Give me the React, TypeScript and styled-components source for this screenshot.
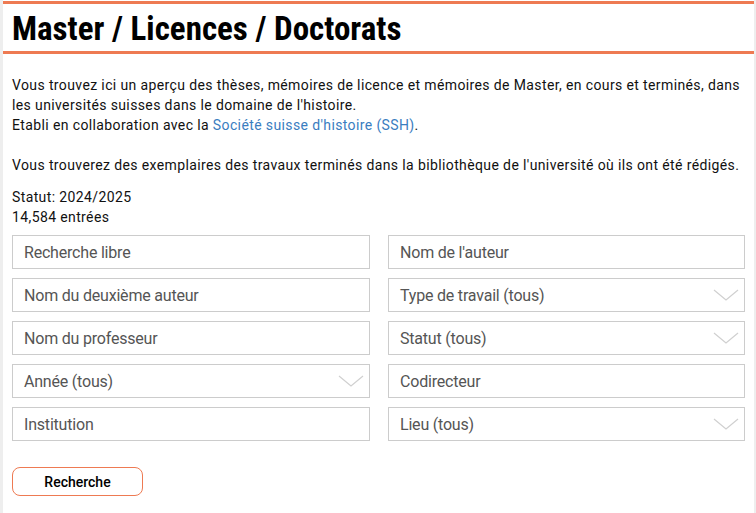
import React from "react";
import styled, { createGlobalStyle } from "styled-components";

const Global = createGlobalStyle`
  html, body { margin: 0; padding: 0; background: #fff; }
  body { font-family: Roboto, "Noto Sans", sans-serif; color: #111; }
`;

const ORANGE = "#ee7a52";

const Page = styled.div`
  width: 756px;
  min-height: 513px;
  box-sizing: border-box;
  border-left: 3px solid #eeeeee;
  border-right: 2px solid #eeeeee;
  padding-top: 1px;
`;

const Heading = styled.h1`
  margin: 0;
  border-top: 3px solid ${ORANGE};
  border-bottom: 3px solid ${ORANGE};
  height: 47px;
  box-sizing: content-box;
  padding: 0 0 0 9px;
  font-family: "Roboto Condensed", Roboto, sans-serif;
  font-weight: 700;
  font-size: 33px;
  line-height: 49px;
  letter-spacing: 0px;
  color: #000;
`;

const Body = styled.div`
  padding: 21px 9px 0 9px;
  font-size: 14px;
  line-height: 20px;
  letter-spacing: 0.38px;
`;

const P = styled.p<{ $gap: number }>`
  margin: 0 0 ${(p) => p.$gap}px 0;
`;

const Status = styled.p`
  margin: 0;
  line-height: 20px;
`;

const Link = styled.a`
  color: #3a7dbf;
  text-decoration: none;
`;

const Grid = styled.div`
  display: grid;
  grid-template-columns: 358px 357px;
  column-gap: 18px;
  row-gap: 9px;
  margin-top: 8px;
  letter-spacing: 0;
`;

const Field = styled.div`
  position: relative;
  height: 34px;
  box-sizing: border-box;
  border: 1px solid #cccccc;
  display: flex;
  align-items: center;
  padding: 2px 0 0 11px;
  font-size: 16px;
  color: #555;
  letter-spacing: -0.2px;
`;

const Chevron = styled.svg`
  position: absolute;
  right: 5px;
  top: 10px;
`;

const Button = styled.button`
  margin-top: 26px;
  width: 131px;
  height: 29px;
  border: 1px solid ${ORANGE};
  border-radius: 8px;
  background: #fff;
  font-family: Roboto, sans-serif;
  font-size: 14px;
  font-weight: 500;
  color: #000;
  cursor: pointer;
`;

const fields: { label: string; select?: boolean }[] = [
  { label: "Recherche libre" },
  { label: "Nom de l'auteur" },
  { label: "Nom du deuxième auteur" },
  { label: "Type de travail (tous)", select: true },
  { label: "Nom du professeur" },
  { label: "Statut (tous)", select: true },
  { label: "Année (tous)", select: true },
  { label: "Codirecteur" },
  { label: "Institution" },
  { label: "Lieu (tous)", select: true },
];

export default function App() {
  return (
    <>
      <Global />
      <Page>
        <Heading>Master / Licences / Doctorats</Heading>
        <Body>
          <P $gap={20}>
            Vous trouvez ici un aperçu des thèses, mémoires de licence et mémoires de Master, en cours et terminés, dans les universités suisses dans le domaine de l'histoire.
            <br />
            Etabli en collaboration avec la <Link href="#">Société suisse d'histoire (SSH)</Link>.
          </P>
          <P $gap={12}>
            Vous trouverez des exemplaires des travaux terminés dans la bibliothèque de l'université où ils ont été rédigés.
          </P>
          <Status>
            Statut: 2024/2025
            <br />
            14,584 entrées
          </Status>
          <Grid>
            {fields.map((f) => (
              <Field key={f.label}>
                {f.label}
                {f.select && (
                  <Chevron width="26" height="12" viewBox="0 0 26 12">
                    <polyline points="1,1 13,11 25,1" fill="none" stroke="#d0d0d0" strokeWidth="1.2" />
                  </Chevron>
                )}
              </Field>
            ))}
          </Grid>
          <Button>Recherche</Button>
        </Body>
      </Page>
    </>
  );
}
